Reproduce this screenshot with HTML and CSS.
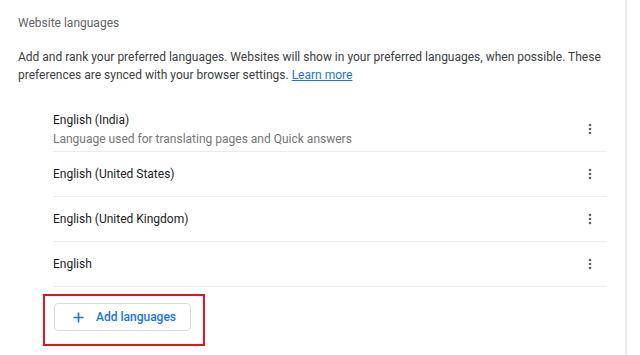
FILE: index.html
```html
<!DOCTYPE html>
<html lang="en">
<head>
    <meta charset="UTF-8">
    <meta name="viewport" content="width=device-width, initial-scale=1.0">
    <title>Languages</title>
    <link rel="stylesheet" href="styles.css">
</head>
<body>
    <div class="page">
        <div class="card">
            <h2 class="section-title">Website languages</h2>
            <p class="intro">Add and rank your preferred languages. Websites will show in your preferred languages, when possible. These preferences are synced with your browser settings. <a href="#">Learn more</a></p>

            <!-- Language list -->
            <div class="lang-list">
                <div class="lang-row">
                    <div class="lang-text">
                        <div class="lang-name">English (India)</div>
                        <div class="lang-sub">Language used for translating pages and Quick answers</div>
                    </div>
                    <svg class="kebab" viewBox="0 0 24 24"><circle cx="12" cy="6" r="2"/><circle cx="12" cy="12" r="2"/><circle cx="12" cy="18" r="2"/></svg>
                </div>
                <div class="lang-row">
                    <div class="lang-text">
                        <div class="lang-name">English (United States)</div>
                    </div>
                    <svg class="kebab" viewBox="0 0 24 24"><circle cx="12" cy="6" r="2"/><circle cx="12" cy="12" r="2"/><circle cx="12" cy="18" r="2"/></svg>
                </div>
                <div class="lang-row">
                    <div class="lang-text">
                        <div class="lang-name">English (United Kingdom)</div>
                    </div>
                    <svg class="kebab" viewBox="0 0 24 24"><circle cx="12" cy="6" r="2"/><circle cx="12" cy="12" r="2"/><circle cx="12" cy="18" r="2"/></svg>
                </div>
                <div class="lang-row">
                    <div class="lang-text">
                        <div class="lang-name">English</div>
                    </div>
                    <svg class="kebab" viewBox="0 0 24 24"><circle cx="12" cy="6" r="2"/><circle cx="12" cy="12" r="2"/><circle cx="12" cy="18" r="2"/></svg>
                </div>
            </div>

            <!-- Highlighted add button -->
            <div class="highlight">
                <button class="add-btn">
                    <svg class="plus" viewBox="0 0 12 12"><path d="M6 0.5v11M0.5 6h11"/></svg>
                    Add languages
                </button>
            </div>
        </div>
        <div class="side-line"></div>
    </div>
</body>
</html>
```

FILE: styles.css
```css
body {
    margin: 0;
    background: #fff;
    font-family: Roboto, "Liberation Sans", Arial, sans-serif;
    font-size: 12px;
    color: #202124;
    overflow: hidden;
}
.page {
    display: flex;
    height: 355px;
}
.card {
    width: 624px;
    height: 351px;
    border-bottom: 1px solid #ececec;
    padding-top: 14px;
    box-sizing: content-box;
}
.side-line {
    width: 2px;
    margin-left: 1px;
    background: #ebebeb;
}
.section-title {
    margin: 0 0 16px 18px;
    font-size: 12px;
    font-weight: 400;
    line-height: 18px;
    color: #5f6368;
}
.intro {
    margin: 0 0 23px 18px;
    width: 600px;
    line-height: 18px;
    color: #3c4043;
}
.intro a {
    color: #1a73e8;
}
.lang-list {
    margin-left: 53px;
    width: 554px;
}
.lang-row {
    display: flex;
    align-items: center;
    height: 44px;
    border-bottom: 1px solid #ececec;
}
.lang-text {
    flex: 1;
}
.lang-name {
    line-height: 18px;
    color: #202124;
}
.lang-sub {
    margin-top: 1px;
    line-height: 18px;
    color: #757575;
}
.kebab {
    width: 16px;
    height: 16px;
    margin-right: 9px;
    fill: #5f6368;
}
.highlight {
    display: inline-block;
    margin: 7px 0 0 43px;
    padding: 7px 12px 13px 9px;
    border: 2px solid #e3151c;
}
.add-btn {
    display: flex;
    align-items: center;
    width: 137px;
    height: 28px;
    padding: 0 0 0 18px;
    background: #fff;
    border: 1px solid #dadce0;
    border-radius: 4px;
    font-family: inherit;
    font-size: 12px;
    font-weight: 500;
    color: #1a73e8;
    cursor: pointer;
}
.plus {
    width: 11px;
    height: 11px;
    margin-right: 12px;
    stroke: #1a73e8;
    stroke-width: 1.8;
    fill: none;
}
```
